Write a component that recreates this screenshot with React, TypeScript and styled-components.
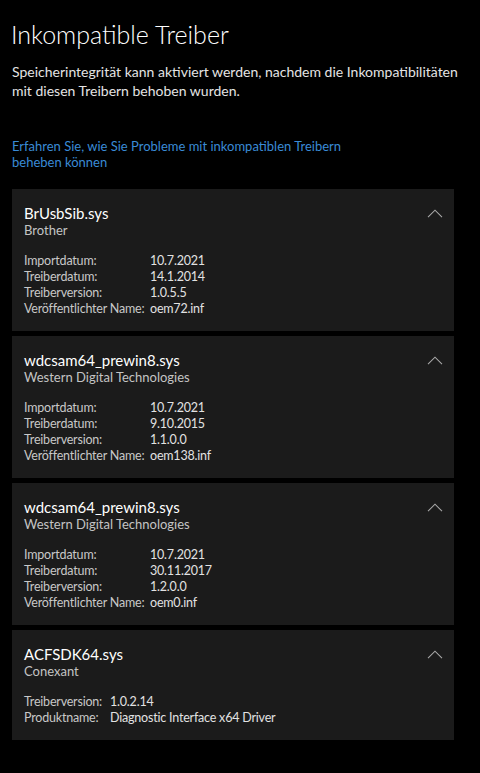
import React from 'react';
import styled, { createGlobalStyle } from 'styled-components';

const GlobalStyle = createGlobalStyle`
  html, body {
    margin: 0;
    padding: 0;
    background: #000;
  }
  body {
    font-family: Lato, "Noto Sans", sans-serif;
    color: #fff;
  }
`;

const Page = styled.main`
  min-height: 773px;
  padding: 18px 26px 30px 12px;
  box-sizing: border-box;
  background: #000;
`;

const Title = styled.h1`
  margin: 0 0 0 -1px;
  font-size: 25px;
  font-weight: 300;
  line-height: 32px;
  color: #fff;
`;

const Description = styled.p`
  margin: 12px -14px 0 0;
  font-size: 14px;
  line-height: 19px;
  color: #e4e4e4;
`;

const HelpLink = styled.a`
  display: block;
  max-width: 345px;
  margin: 38px 0 19px;
  font-size: 13px;
  line-height: 16px;
  color: #3a8bd6;
  text-decoration: none;
`;

const List = styled.div`
  display: flex;
  flex-direction: column;
  gap: 5px;
`;

const Card = styled.section`
  background: #1b1b1b;
  padding: 15px 11px 14px 12px;
`;

const CardHead = styled.div`
  display: flex;
  justify-content: space-between;
  align-items: flex-start;
`;

const DriverName = styled.div`
  font-size: 15px;
  line-height: 18px;
  color: #fff;
`;

const Vendor = styled.div`
  font-size: 13px;
  line-height: 16px;
  color: #c4c4c4;
`;

const Chevron = styled.svg`
  width: 16px;
  height: 9px;
  margin-top: 5px;
  flex-shrink: 0;
`;

const Details = styled.div<{ $labelWidth: number }>`
  display: grid;
  grid-template-columns: ${({ $labelWidth }) => $labelWidth}px 1fr;
  margin-top: 15px;
  font-size: 12.5px;
  line-height: 16px;
  letter-spacing: -0.2px;
  white-space: nowrap;
`;

const Label = styled.span`
  color: #c8c8c8;
`;

const Value = styled.span`
  color: #e2e2e2;
`;

type Driver = {
  file: string;
  vendor: string;
  labelWidth: number;
  rows: [string, string][];
};

const drivers: Driver[] = [
  {
    file: 'BrUsbSib.sys',
    vendor: 'Brother',
    labelWidth: 126,
    rows: [
      ['Importdatum:', '10.7.2021'],
      ['Treiberdatum:', '14.1.2014'],
      ['Treiberversion:', '1.0.5.5'],
      ['Veröffentlichter Name:', 'oem72.inf'],
    ],
  },
  {
    file: 'wdcsam64_prewin8.sys',
    vendor: 'Western Digital Technologies',
    labelWidth: 126,
    rows: [
      ['Importdatum:', '10.7.2021'],
      ['Treiberdatum:', '9.10.2015'],
      ['Treiberversion:', '1.1.0.0'],
      ['Veröffentlichter Name:', 'oem138.inf'],
    ],
  },
  {
    file: 'wdcsam64_prewin8.sys',
    vendor: 'Western Digital Technologies',
    labelWidth: 126,
    rows: [
      ['Importdatum:', '10.7.2021'],
      ['Treiberdatum:', '30.11.2017'],
      ['Treiberversion:', '1.2.0.0'],
      ['Veröffentlichter Name:', 'oem0.inf'],
    ],
  },
  {
    file: 'ACFSDK64.sys',
    vendor: 'Conexant',
    labelWidth: 86,
    rows: [
      ['Treiberversion:', '1.0.2.14'],
      ['Produktname:', 'Diagnostic Interface x64 Driver'],
    ],
  },
];

function DriverCard({ driver }: { driver: Driver }) {
  return (
    <Card>
      <CardHead>
        <div>
          <DriverName>{driver.file}</DriverName>
          <Vendor>{driver.vendor}</Vendor>
        </div>
        <Chevron viewBox="0 0 16 9">
          <path d="M1 8.2 L8 1.2 L15 8.2" fill="none" stroke="#a8a8a8" strokeWidth="1.1" />
        </Chevron>
      </CardHead>
      <Details $labelWidth={driver.labelWidth}>
        {driver.rows.map(([label, value]) => (
          <React.Fragment key={label}>
            <Label>{label}</Label>
            <Value>{value}</Value>
          </React.Fragment>
        ))}
      </Details>
    </Card>
  );
}

export default function App() {
  return (
    <>
      <GlobalStyle />
      <Page>
        <Title>Inkompatible Treiber</Title>
        <Description>
          Speicherintegrität kann aktiviert werden, nachdem die Inkompatibilitäten mit diesen Treibern behoben wurden.
        </Description>
        <HelpLink href="#">Erfahren Sie, wie Sie Probleme mit inkompatiblen Treibern beheben können</HelpLink>
        <List>
          {drivers.map((d, i) => (
            <DriverCard key={i} driver={d} />
          ))}
        </List>
      </Page>
    </>
  );
}
